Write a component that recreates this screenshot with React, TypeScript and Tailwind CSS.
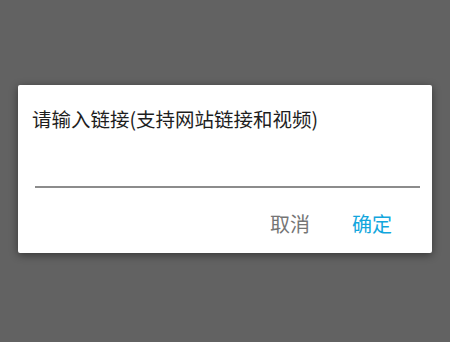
import React from 'react';

const App: React.FC = () => {
  return (
    <div
      className="min-h-[342px] w-[450px] bg-[#626262] pt-[85px] pl-[18px]"
      style={{ fontFamily: '"Noto Sans CJK SC", "Noto Sans", sans-serif' }}
    >
      <div className="w-[414px] h-[168px] bg-white rounded-[2px] shadow-[0_2px_8px_rgba(0,0,0,0.45)] flex flex-col">
        <div className="pl-[14px] pt-[24px] text-[19.5px] leading-[20px] text-[#1e1e1e]">
          请输入链接(支持网站链接和视频)
        </div>
        <div className="ml-[17px] mr-[12px] mt-[57px] h-[1.5px] bg-[#8c8c8c]" />
        <div className="flex justify-end items-center gap-[42px] pr-[40px] pt-[26px] text-[20px] leading-[20px]">
          <button className="text-[#757575]">取消</button>
          <button className="text-[#12a6dd]">确定</button>
        </div>
      </div>
    </div>
  );
};

export default App;
